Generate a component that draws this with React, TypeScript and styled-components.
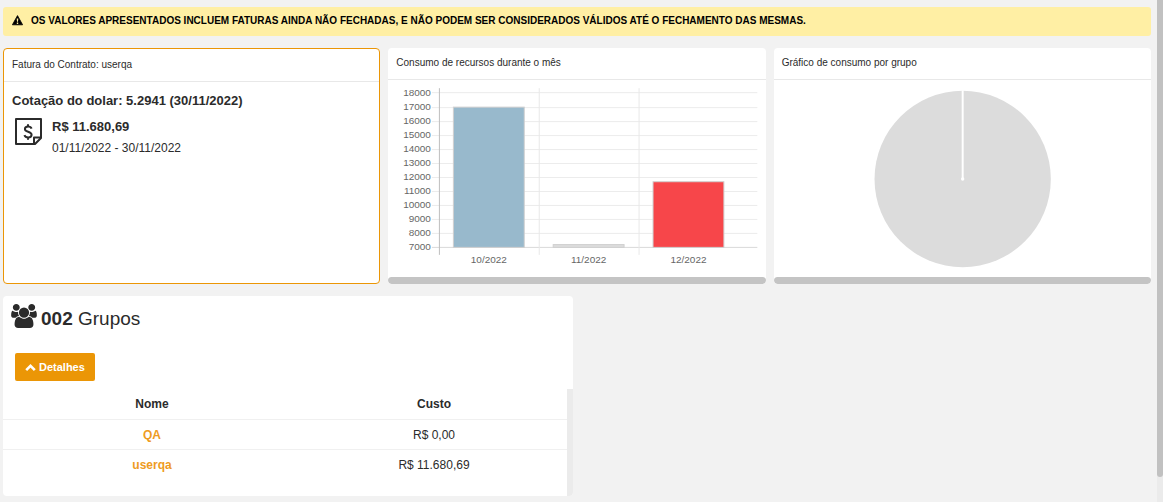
import React from "react";
import styled, { createGlobalStyle, css } from "styled-components";

const orange = "#eb9606";

const GlobalStyle = createGlobalStyle`
  *, *::before, *::after { box-sizing: border-box; }
  body {
    margin: 0;
    background: #f2f2f2;
    color: #2b2b2b;
    font: 12px/16px "Liberation Sans", Arial, sans-serif;
  }
`;

const Page = styled.main`
  display: flex;
  flex-direction: column;
  gap: 12px;
  padding: 7px 12px 6px 3px;
`;

const PageScrollbar = styled.div`
  position: fixed;
  top: 0;
  right: 0;
  bottom: 0;
  width: 6px;
  background: #ebebeb;
  &::before {
    content: "";
    display: block;
    height: 95%;
    background: #c1c1c1;
    border-radius: 0 0 4px 4px;
  }
`;

const Alert = styled.div`
  display: flex;
  align-items: center;
  gap: 8px;
  min-height: 29px;
  padding: 0 9px 2px;
  border-radius: 3px;
  background: #ffefa4;
  color: #000;
  font-size: 10px;
  font-weight: 700;
`;

const Cards = styled.div`
  display: grid;
  grid-template-columns: repeat(3, minmax(0, 1fr));
  gap: 8px;
`;

const Card = styled.section<{ $outlined?: boolean }>`
  display: flex;
  flex-direction: column;
  min-height: 236px;
  overflow: hidden;
  border-radius: 4px;
  background: #fff;
  ${(p) =>
    p.$outlined &&
    css`
      padding-top: 1px;
      border: 1px solid ${orange};
    `}
`;

const CardTitle = styled.h2`
  margin: 0;
  padding: 7px 8px 8px;
  border-bottom: 1px solid #e8e8e8;
  font-size: 10px;
  font-weight: 400;
  line-height: 16px;
`;

const CardScrollbar = styled.div`
  height: 7px;
  margin-top: auto;
  border-radius: 4px;
  background: #c4c4c4;
`;

const Drawing = styled.svg`
  display: block;
  width: 100%;
  height: 197px;
`;

const Invoice = styled.div`
  padding: 11px 8px;
`;

const Quote = styled.p`
  margin: 0;
  font-size: 13px;
  font-weight: 700;
  line-height: 16px;
`;

const InvoiceRow = styled.div`
  display: flex;
  gap: 10px;
  padding: 8px 2px;
`;

const InvoiceText = styled.div`
  display: flex;
  flex-direction: column;
  gap: 5px;
  padding-top: 2px;
`;

const Groups = styled.section`
  width: calc(50% - 4px);
  min-height: 200px;
  overflow: hidden;
  border-radius: 4px;
  background: #fff;
`;

const GroupsTitle = styled.h2`
  display: flex;
  align-items: flex-start;
  gap: 4px;
  margin: 0;
  padding: 8px 8px 0;
  font-size: 19px;
  font-weight: 400;
  line-height: 30px;
`;

const DetailsButton = styled.button`
  display: flex;
  align-items: center;
  gap: 3px;
  height: 28px;
  margin: 19px 12px 8px;
  padding: 0 10px;
  border: 0;
  border-radius: 2px;
  background: ${orange};
  color: #fff;
  font: 700 11px/16px "Liberation Sans", Arial, sans-serif;
  cursor: pointer;
`;

const TableArea = styled.div`
  min-height: 107px;
  border-right: 6px solid #ebebeb;
`;

const Table = styled.table`
  width: 100%;
  table-layout: fixed;
  border-collapse: separate;
  border-spacing: 0;
  text-align: center;
  th,
  td {
    height: 30px;
    padding: 0 0 0 16px;
  }
  td {
    border-top: 1px solid #f0f0f0;
  }
`;

const GroupLink = styled.a`
  color: #ee9b22;
  font-weight: 700;
  text-decoration: none;
`;

const WarningIcon = () => (
  <svg width="11" height="11" viewBox="0 0 11 11" aria-hidden="true">
    <path d="M5.5 0.6L10.6 9.8H0.4Z" fill="#000" stroke="#000" strokeWidth="0.8" strokeLinejoin="round" />
    <path d="M4.7 3.6H6.3L6 6.8H5ZM4.8 7.6H6.2V9H4.8Z" fill="#ffefa4" />
  </svg>
);

const ChevronUpIcon = () => (
  <svg width="11" height="11" viewBox="0 0 11 11" fill="none" stroke="currentColor" strokeWidth="2.6" aria-hidden="true">
    <path d="M1.2 8.2L5.5 3.9L9.8 8.2" />
  </svg>
);

const InvoiceIcon = () => (
  <svg width="28" height="28" viewBox="0 0 28 28" fill="none" stroke="#2b2b2b" strokeWidth="2" strokeLinejoin="round" aria-hidden="true">
    <path d="M2 2H27V21L21 27H2Z" />
    <path d="M20 27V20.5H27" />
    <path d="M17.6 11.6C17 10.2 15.8 9.5 14.1 9.5C12.2 9.5 10.9 10.5 10.9 12C10.9 15.6 17.6 13.8 17.6 17.8C17.6 19.5 16.2 20.5 14.2 20.5C12.3 20.5 11 19.7 10.4 18.1M14 7.3V9.5M14 20.5V22.8" />
  </svg>
);

const UsersIcon = () => (
  <svg width="26" height="24" viewBox="0 0 1920 1792" fill="currentColor" aria-hidden="true">
    <path d="M593 896q-162 5-265 128h-134q-82 0-138-40.5t-56-118.5q0-353 124-353 6 0 43.5 21t97.5 42.5 119 21.5q67 0 133-23-5 37-5 66 0 139 81 256zm1071 637q0 120-73 189.5t-194 69.5h-874q-121 0-194-69.5t-73-189.5q0-53 3.5-103.5t14-109 26.5-108.5 43-97.5 62-81 85.5-53.5 111.5-20q10 0 43 21.5t73 48 107 48 135 21.5 135-21.5 107-48 73-48 43-21.5q61 0 111.5 20t85.5 53.5 62 81 43 97.5 26.5 108.5 14 109 3.5 103.5zm-1024-1277q0 106-75 181t-181 75-181-75-75-181 75-181 181-75 181 75 75 181zm704 384q0 159-112.5 271.5t-271.5 112.5-271.5-112.5-112.5-271.5 112.5-271.5 271.5-112.5 271.5 112.5 112.5 271.5zm576 225q0 78-56 118.5t-138 40.5h-134q-103-123-265-128 81-117 81-256 0-29-5-66 66 23 133 23 59 0 119-21.5t97.5-42.5 43.5-21q124 0 124 353zm-128-609q0 106-75 181t-181 75-181-75-75-181 75-181 181-75 181 75 75 181z" />
  </svg>
);

const bars = [
  { label: "10/2022", value: 17000, color: "#98b9cc" },
  { label: "11/2022", value: 7200, color: "#dcdcdc" },
  { label: "12/2022", value: 11680.69, color: "#f7464a" },
];
const ticks = Array.from({ length: 12 }, (_, i) => 7000 + i * 1000);
const yOf = (value: number) => 167.5 - ((value - 7000) / 1000) * 14.05;

const BarChart = () => (
  <Drawing viewBox="0 0 378 197" role="img" aria-label="Consumo de recursos durante o mês">
    <g fontSize="10" fill="#666">
      {ticks.map((t) => (
        <g key={t}>
          <rect x="44" y={Math.round(yOf(t) - 0.5)} width="326" height="1" fill={t === 7000 ? "#d9d9d9" : "#ececec"} />
          <text x="43" y={yOf(t) + 2.5} textAnchor="end">{t}</text>
        </g>
      ))}
      {bars.map((b, i) => (
        <g key={b.label}>
          <rect x={51 + i * 100} y="8" width="1" height="167" fill={i ? "#e8e8e8" : "#bfbfbf"} />
          <rect x={65.5 + i * 100} y={yOf(b.value)} width="71" height={167.5 - yOf(b.value)} fill={b.color} stroke="#d0d0d0" />
          <text x={101 + i * 100} y="183" textAnchor="middle">{b.label}</text>
        </g>
      ))}
    </g>
  </Drawing>
);

const PieChart = () => (
  <Drawing viewBox="0 0 378 197" role="img" aria-label="Gráfico de consumo por grupo">
    <circle cx="189" cy="99" r="88.3" fill="#dcdcdc" />
    <path d="M189 10V99" stroke="#fff" strokeWidth="2" />
    <circle cx="189" cy="99" r="1.7" fill="#fff" />
  </Drawing>
);

const rows = [
  { name: "QA", cost: "R$ 0,00" },
  { name: "userqa", cost: "R$ 11.680,69" },
];

export default function App() {
  return (
    <>
      <GlobalStyle />
      <Page>
        <Alert role="alert">
          <WarningIcon />
          <span>OS VALORES APRESENTADOS INCLUEM FATURAS AINDA NÃO FECHADAS, E NÃO PODEM SER CONSIDERADOS VÁLIDOS ATÉ O FECHAMENTO DAS MESMAS.</span>
        </Alert>
        <Cards>
          <Card $outlined>
            <CardTitle>Fatura do Contrato: userqa</CardTitle>
            <Invoice>
              <Quote>Cotação do dolar: 5.2941 (30/11/2022)</Quote>
              <InvoiceRow>
                <InvoiceIcon />
                <InvoiceText>
                  <Quote>R$ 11.680,69</Quote>
                  <span>01/11/2022 - 30/11/2022</span>
                </InvoiceText>
              </InvoiceRow>
            </Invoice>
          </Card>
          <Card>
            <CardTitle>Consumo de recursos durante o mês</CardTitle>
            <BarChart />
            <CardScrollbar />
          </Card>
          <Card>
            <CardTitle>Gráfico de consumo por grupo</CardTitle>
            <PieChart />
            <CardScrollbar />
          </Card>
        </Cards>
        <Groups>
          <GroupsTitle>
            <UsersIcon />
            <span><strong>002</strong> Grupos</span>
          </GroupsTitle>
          <DetailsButton type="button" aria-expanded="true">
            <ChevronUpIcon />
            Detalhes
          </DetailsButton>
          <TableArea>
            <Table>
              <thead>
                <tr>
                  <th scope="col">Nome</th>
                  <th scope="col">Custo</th>
                </tr>
              </thead>
              <tbody>
                {rows.map((r) => (
                  <tr key={r.name}>
                    <td><GroupLink href="#">{r.name}</GroupLink></td>
                    <td>{r.cost}</td>
                  </tr>
                ))}
              </tbody>
            </Table>
          </TableArea>
        </Groups>
      </Page>
      <PageScrollbar />
    </>
  );
}
